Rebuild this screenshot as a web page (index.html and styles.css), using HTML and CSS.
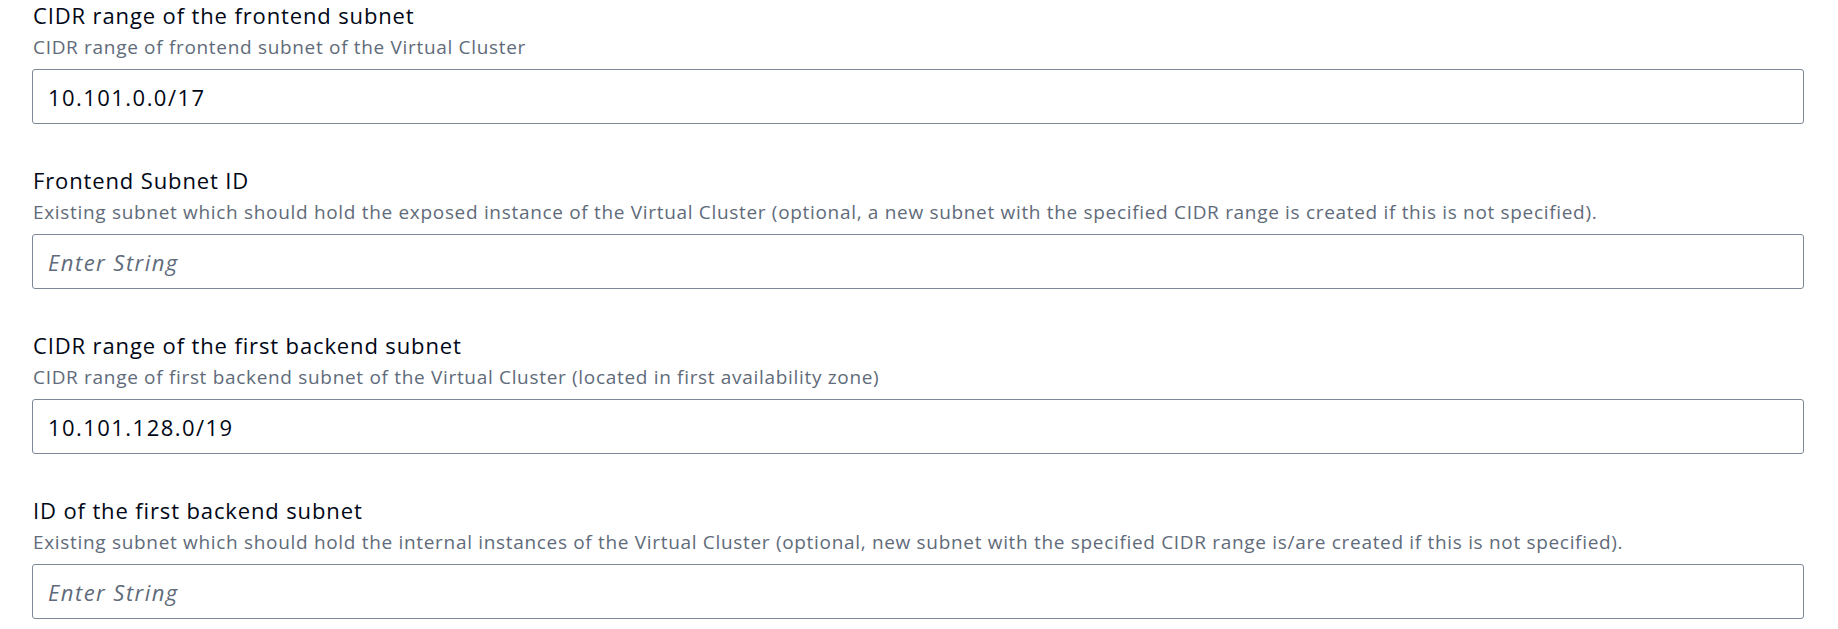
FILE: index.html
```html
<!DOCTYPE html>
<html lang="en">
<head>
<meta charset="utf-8">
<title>Subnet settings</title>
<link rel="stylesheet" href="styles.css">
</head>
<body>
<form class="form">
  <div class="field">
    <label class="label" for="f1">CIDR range of the frontend subnet</label>
    <div class="desc">CIDR range of frontend subnet of the Virtual Cluster</div>
    <input class="input" id="f1" type="text" value="10.101.0.0/17">
  </div>
  <div class="field">
    <label class="label" for="f2">Frontend Subnet ID</label>
    <div class="desc">Existing subnet which should hold the exposed instance of the Virtual Cluster (optional, a new subnet with the specified CIDR range is created if this is not specified).</div>
    <input class="input" id="f2" type="text" placeholder="Enter String">
  </div>
  <div class="field">
    <label class="label" for="f3">CIDR range of the first backend subnet</label>
    <div class="desc">CIDR range of first backend subnet of the Virtual Cluster (located in first availability zone)</div>
    <input class="input" id="f3" type="text" value="10.101.128.0/19">
  </div>
  <div class="field">
    <label class="label" for="f4">ID of the first backend subnet</label>
    <div class="desc">Existing subnet which should hold the internal instances of the Virtual Cluster (optional, new subnet with the specified CIDR range is/are created if this is not specified).</div>
    <input class="input" id="f4" type="text" placeholder="Enter String">
  </div>
</form>
</body>
</html>
```

FILE: styles.css
```css
html, body {
  margin: 0;
  padding: 0;
  background: #ffffff;
}
body {
  font-family: "Open Sans", "Noto Sans", "Liberation Sans", sans-serif;
  color: #000716;
}
.form {
  display: flex;
  flex-direction: column;
  gap: 41px;
  padding: 0 34px 0 32px;
}
.field {
  display: flex;
  flex-direction: column;
}
.label {
  display: block;
  font-size: 22px;
  line-height: 30px;
  letter-spacing: 0.87px;
  padding-left: 1px;
  color: #000716;
}
.desc {
  margin-top: 5px;
  font-size: 19px;
  line-height: 24px;
  letter-spacing: 0.68px;
  padding-left: 1px;
  color: #5f6b7a;
}
.input {
  box-sizing: border-box;
  margin-top: 10px;
  height: 55px;
  width: 100%;
  border: 1px solid #7d8998;
  border-radius: 3px;
  padding: 0 15px;
  font-family: inherit;
  font-size: 22px;
  letter-spacing: 1.45px;
  color: #000716;
  background: #ffffff;
  outline: none;
}
.input::placeholder {
  color: #5f6b7a;
  font-style: italic;
  opacity: 1;
}
```
